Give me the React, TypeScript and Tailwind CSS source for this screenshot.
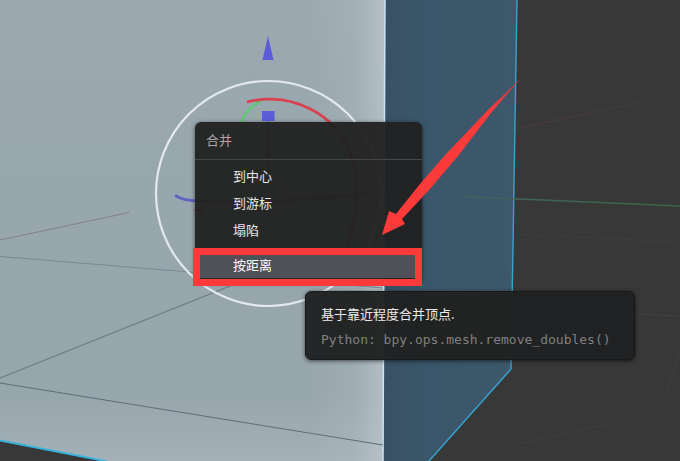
const mergeOptions = ["到中心", "到游标", "塌陷"];

const Viewport = () => (
  <svg
    className="absolute inset-0 h-full w-full"
    viewBox="0 0 680 461"
    preserveAspectRatio="xMinYMin slice"
    aria-hidden="true"
  >
    <defs>
      <linearGradient id="front" x1="0" y1="0" x2="0" y2="461" gradientUnits="userSpaceOnUse">
        <stop offset="0" stopColor="#9ca9b1" />
        <stop offset="0.35" stopColor="#98a6ae" />
        <stop offset="0.85" stopColor="#97a5ad" />
        <stop offset="1" stopColor="#a3b0b7" />
      </linearGradient>
      <linearGradient id="glow" x1="310" y1="0" x2="385" y2="0" gradientUnits="userSpaceOnUse">
        <stop offset="0" stopColor="#b9c3c9" stopOpacity="0" />
        <stop offset="0.6" stopColor="#b9c3c9" stopOpacity="0.25" />
        <stop offset="1" stopColor="#bbc5cb" stopOpacity="0.8" />
      </linearGradient>
      <linearGradient id="side" x1="384" y1="0" x2="517" y2="0" gradientUnits="userSpaceOnUse">
        <stop offset="0" stopColor="#395165" />
        <stop offset="0.3" stopColor="#3b566a" />
        <stop offset="1" stopColor="#3d586b" />
      </linearGradient>
      <linearGradient id="xAxis" x1="510" y1="0" x2="680" y2="0" gradientUnits="userSpaceOnUse">
        <stop offset="0" stopColor="#523c3f" />
        <stop offset="1" stopColor="#40393a" />
      </linearGradient>
      <linearGradient id="yAxis" x1="462" y1="0" x2="680" y2="0" gradientUnits="userSpaceOnUse">
        <stop offset="0" stopColor="#3d655f" />
        <stop offset="1" stopColor="#3d6540" />
      </linearGradient>
    </defs>

    <rect width="680" height="461" fill="#383839" />

    {/* floor grid behind the cube */}
    <g fill="none" strokeWidth="1">
      <path d="M514 129 L680 94" stroke="url(#xAxis)" />
      <path d="M514 445 L608 424" stroke="#473b3c" />
      <path d="M636 314 L680 316" stroke="#424244" />
      <path d="M680 350 L664 397" stroke="#3f3f41" />
      <path d="M512 234 L680 242" stroke="#3e3e40" />
      <path d="M512 150 L680 154 M512 165 L680 171" stroke="#3b3b3d" />
    </g>

    {/* cube faces */}
    <path d="M385 0 H517 L511 369 L429 461 H383 Z" fill="url(#side)" />
    <path d="M0 0 H385 L383 461 H105 L0 440 Z" fill="url(#front)" />
    <path d="M310 0 H385 L383 461 H310 Z" fill="url(#glow)" />
    <path d="M385 0 L383 461" stroke="#c9e4f3" strokeWidth="1.5" />
    <path d="M517 0 L511 369 L429 461" fill="none" stroke="#37a3cf" strokeWidth="1.4" />
    <path d="M0 440.5 L107 461.5" stroke="#35b3da" strokeWidth="1.8" />
    <path d="M462 196.5 L680 206" stroke="url(#yAxis)" strokeWidth="1.3" />

    <g fill="none">
      <path d="M0 240 L129 212.5" stroke="#837f88" />
      <path d="M0 256.5 L190 272 L383 288" stroke="#7b8991" />
      <path d="M0 378 L230 286" stroke="#6b7880" strokeWidth="1.1" />
      <path d="M0 383 L383 445" stroke="#5f6d75" />
    </g>

    {/* transform gizmo */}
    <path d="M268 36 L273.5 60 H262.5 Z" fill="#5b5cd8" />
    <rect x="262" y="111" width="12.5" height="10" fill="#5b5cd8" />
    <path d="M268 121 V174" stroke="#5b5cd8" strokeWidth="1" />
    <g fill="none" strokeWidth="2.8">
      <path d="M241 124 Q246 108 261 101" stroke="#64c47b" />
      <path d="M247 102 C291 91 335 113 351 154 Q366 203 343 255" stroke="#d8414d" />
      <path d="M175 195.5 Q184 201 200 201 Q260 204 367 194" stroke="#6262c3" />
      <circle cx="268.5" cy="193.5" r="112.5" stroke="#e4e9ef" strokeWidth="2.2" />
      <circle cx="268.5" cy="193.5" r="19" stroke="#e4e9ef" strokeWidth="1" />
    </g>
    <path d="M193 210 L204 206 V215 Z" fill="#b75757" />
  </svg>
);

const MergeMenu = () => (
  <div
    role="menu"
    className="absolute left-[195px] top-[122px] w-[227px] rounded-md bg-[#212121]/96 pb-1 text-[13px] shadow-[0_1px_4px_rgba(0,0,0,0.6)]"
  >
    <h2 className="flex h-[38px] items-center border-b border-[#474747] px-[11px] pb-[2px] text-[#a8a8a8]">合并</h2>
    <div className="flex flex-col gap-2 pt-[2px] text-[#e8e8e8]">
      <div className="flex flex-col">
        {mergeOptions.map((label) => (
          <button key={label} role="menuitem" className="h-[27px] px-[38px] text-left hover:bg-[#505058]">
            {label}
          </button>
        ))}
      </div>
      <button role="menuitem" className="relative h-[27px] bg-[#505058] px-[38px] text-left text-white">
        按距离
        {/* red frame around the highlighted entry */}
        <span className="pointer-events-none absolute -bottom-2 -left-[2px] -top-[3px] right-0 border-[7px] border-[#fc3a3a]" />
      </button>
    </div>
  </div>
);

const OperatorTooltip = () => (
  <div
    role="tooltip"
    className="absolute left-[305px] top-[291px] w-[330px] rounded-md border border-[#191919] bg-[#202121]/97 px-[15px] pb-[6px] pt-[9px] text-[13px] leading-[26px] shadow-[0_1px_4px_rgba(0,0,0,0.6)]"
  >
    <p className="whitespace-nowrap text-[#ececec]">基于靠近程度合并顶点.</p>
    <p className="whitespace-nowrap font-['DejaVu_Sans_Mono',monospace] text-[#808080]">
      Python: bpy.ops.mesh.remove_doubles()
    </p>
  </div>
);

const PointerArrow = () => (
  <svg
    className="pointer-events-none absolute inset-0 h-full w-full"
    viewBox="0 0 680 461"
    preserveAspectRatio="xMinYMin slice"
    aria-hidden="true"
  >
    <defs>
      <linearGradient id="arrow" x1="521" y1="78" x2="490" y2="110" gradientUnits="userSpaceOnUse">
        <stop offset="0" stopColor="#b83c4c" />
        <stop offset="1" stopColor="#fc3a3a" />
      </linearGradient>
    </defs>
    <path
      d="M521 78 L488 110 L447 153 L420 184 L396 214 L389 211 L382 235 L405 224 L402 219 L430 189 L458 156 L491 113 Z"
      fill="url(#arrow)"
    />
  </svg>
);

const App = () => {
  return (
    <main className="relative min-h-screen overflow-hidden bg-[#383839] font-['Noto_Sans_CJK_SC',sans-serif]">
      <Viewport />
      <MergeMenu />
      <OperatorTooltip />
      <PointerArrow />
    </main>
  );
};

export default App;
